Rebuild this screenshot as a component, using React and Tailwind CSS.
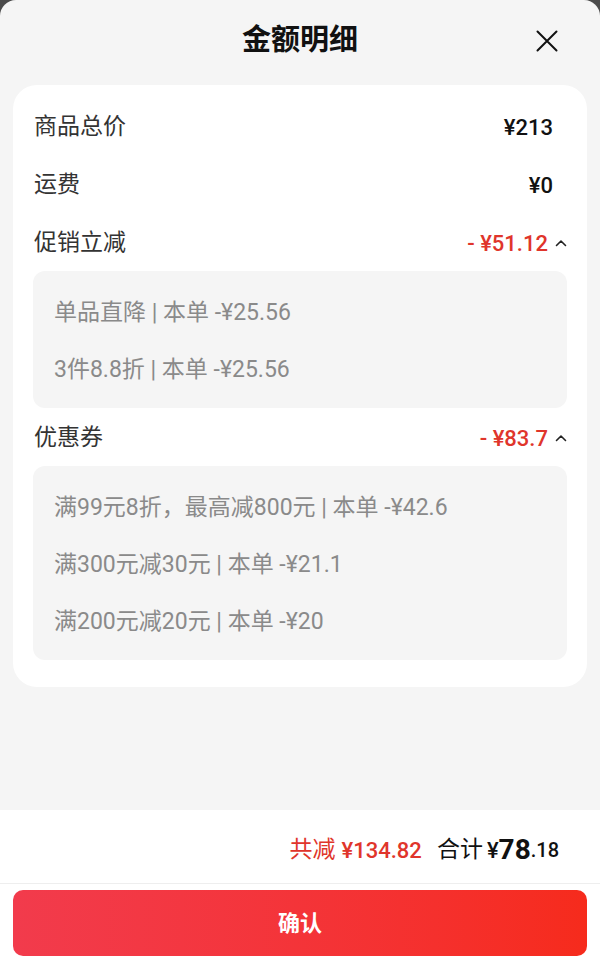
import React from "react";

const FONT = { fontFamily: "Roboto, 'Noto Sans CJK SC', sans-serif" };

function Caret() {
  return (
    <svg width="12" height="8" viewBox="0 0 12 8" className="ml-[7px]">
      <path d="M1.5 6.5 L6 2 L10.5 6.5" fill="none" stroke="#222" strokeWidth="1.6" strokeLinecap="round" strokeLinejoin="round" />
    </svg>
  );
}

function Row({ label, value, red, caret }) {
  return (
    <div className="h-[58px] flex items-center justify-between pt-[2px]">
      <span className="text-[23px] text-[#333] pl-[1px]">{label}</span>
      <div className={`flex items-center ${caret ? "" : "mr-[14px]"}`}>
        <span className={`text-[22px] font-medium ${red ? "text-[#e0352b]" : "text-[#111]"}`}>{value}</span>
        {caret && <Caret />}
      </div>
    </div>
  );
}

function SubBox({ items }) {
  return (
    <div className="bg-[#f5f5f5] rounded-[12px] pt-[13.5px] pb-[9.5px] px-[21px]">
      {items.map((t, i) => (
        <div key={i} className="h-[57px] flex items-center text-[23px] text-[#8a8a8a]">
          {t}
        </div>
      ))}
    </div>
  );
}

export default function App() {
  return (
    <div className="bg-[#4b4b4b] w-[600px] h-[971px]" style={FONT}>
      <div className="bg-[#f5f5f5] rounded-t-[16px] h-[971px] flex flex-col">
        <div className="h-[85px] relative flex items-center justify-center pb-[3px]">
          <span className="text-[29px] font-bold text-[#111]">金额明细</span>
          <svg className="absolute left-[536px] top-[30px]" width="22" height="22" viewBox="0 0 22 22">
            <path d="M1.5 1.5 L20.5 20.5 M20.5 1.5 L1.5 20.5" stroke="#111" strokeWidth="2" strokeLinecap="round" />
          </svg>
        </div>
        <div className="mx-[13px] bg-white rounded-[24px] px-5 pt-[12px] pb-[27px]">
          <Row label="商品总价" value="¥213" />
          <Row label="运费" value="¥0" />
          <Row label="促销立减" value="- ¥51.12" red caret />
          <SubBox items={["单品直降 | 本单 -¥25.56", "3件8.8折 | 本单 -¥25.56"]} />
          <Row label="优惠券" value="- ¥83.7" red caret />
          <SubBox
            items={[
              "满99元8折，最高减800元 | 本单 -¥42.6",
              "满300元减30元 | 本单 -¥21.1",
              "满200元减20元 | 本单 -¥20",
            ]}
          />
        </div>
        <div className="flex-1" />
        <div className="bg-white h-[161px] flex flex-col">
          <div className="h-[74px] flex items-center justify-end pr-[41px] pt-[7px] border-b border-[#eeeeee]">
            <span className="text-[23px] text-[#e0352b]">共减</span>
            <span className="text-[22px] font-medium text-[#e0352b] ml-[6px]">¥134.82</span>
            <span className="text-[23px] text-[#111] ml-[15px]">合计</span>
            <span className="text-[22px] font-medium text-[#111] ml-[4px]">¥</span>
            <span className="text-[28px] font-bold text-[#111] leading-none">78</span>
            <span className="text-[20px] font-medium text-[#111]">.18</span>
          </div>
          <div className="px-[13px] pt-[6px]">
            <button className="w-full h-[66px] rounded-[10px] bg-gradient-to-r from-[#f23b4c] to-[#f62b1c] text-white text-[22px] font-bold flex items-center justify-center">
              确认
            </button>
          </div>
        </div>
      </div>
    </div>
  );
}
